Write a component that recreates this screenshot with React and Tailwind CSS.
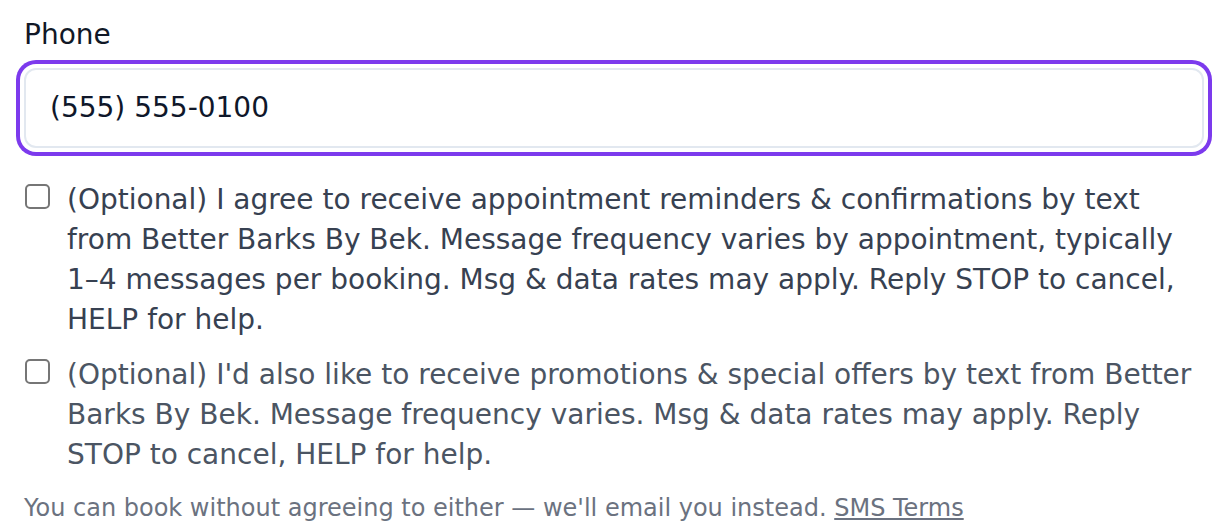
import React from 'react';

const font = { fontFamily: '"DejaVu Sans", sans-serif' };

const ConsentRow = ({ tone, children }) => (
    <label className="flex items-start gap-[17px] cursor-pointer">
        <span className="mt-[4px] ml-[1px] shrink-0 w-[25px] h-[25px] rounded-[5px] border-2 border-[#767676] bg-white" />
        <span className={`text-[28px] leading-[40px] ${tone}`}>{children}</span>
    </label>
);

export default function App() {
    return (
        <div className="bg-white w-[1228px] h-[524px] px-[24px] pt-[15px] overflow-hidden" style={font}>
            <div className="text-[28px] leading-[40px] text-[#111827]">Phone</div>
            <div className="mt-[13px] h-[80px] rounded-[12px] border-2 border-[#e2e8f0] bg-white ring-[4px] ring-[#7c3aed] ring-offset-[4px] ring-offset-white flex items-center px-[24px]">
                <span className="text-[28px] text-[#0f172a]">(555) 555-0100</span>
            </div>

            <div className="mt-[32px] flex flex-col gap-[15px]">
                <ConsentRow tone="text-[#374151]">
                    (Optional) I agree to receive appointment reminders &amp; confirmations by text from Better Barks By Bek. Message frequency varies by appointment, typically 1–4 messages per booking. Msg &amp; data rates may apply. Reply STOP to cancel, HELP for help.
                </ConsentRow>
                <ConsentRow tone="text-[#4b5563]">
                    (Optional) I'd also like to receive promotions &amp; special offers by text from Better Barks By Bek. Message frequency varies. Msg &amp; data rates may apply. Reply STOP to cancel, HELP for help.
                </ConsentRow>
            </div>

            <p className="mt-[17px] text-[24px] leading-[32px] text-[#6b7280]">
                You can book without agreeing to either — we'll email you instead.{' '}
                <a href="#" className="underline">SMS Terms</a>
            </p>
        </div>
    );
}
